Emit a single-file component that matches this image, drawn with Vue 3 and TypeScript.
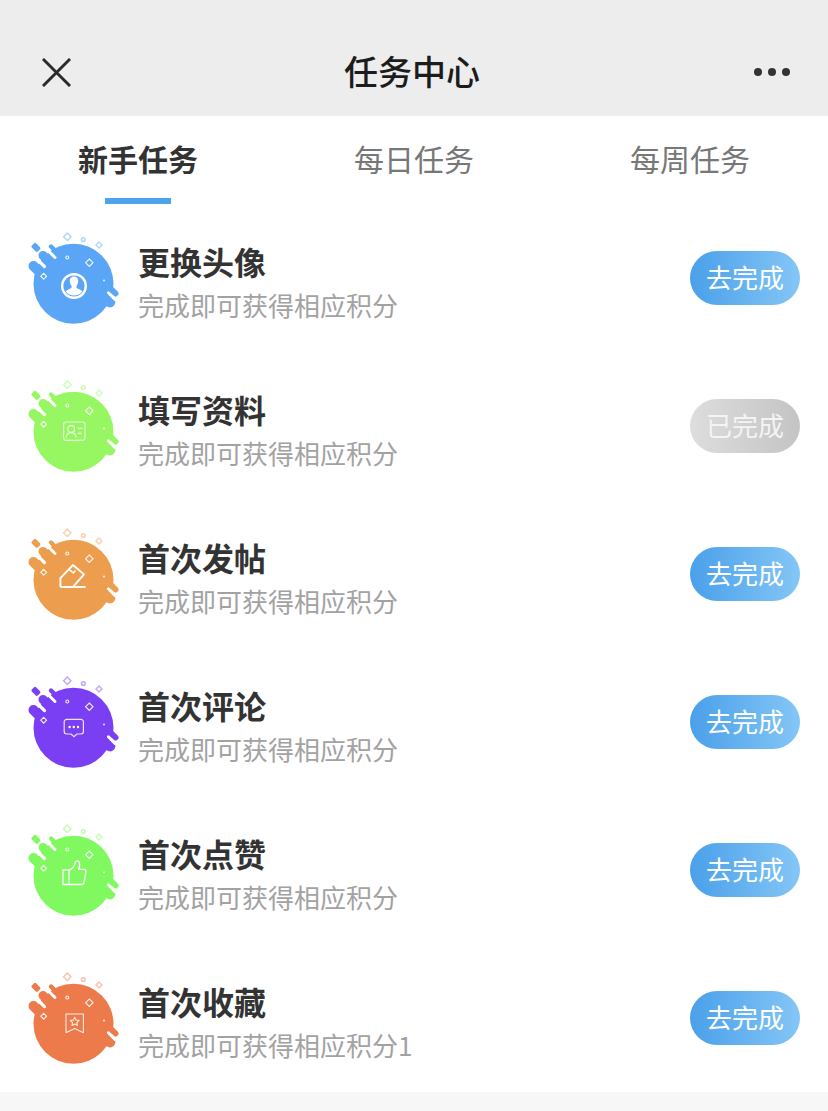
<template>
  <div class="page">
    <header class="nav">
      <svg class="nav-close" viewBox="0 0 30 30">
        <path d="M1 1 L29 29 M29 1 L1 29" />
      </svg>
      <span class="nav-title">任务中心</span>
      <span class="nav-more"><i /><i /><i /></span>
    </header>

    <nav class="tabs">
      <div v-for="(tab, i) in tabs" :key="tab" class="tab" :class="{ active: i === 0 }">
        {{ tab }}
      </div>
    </nav>

    <ul class="list">
      <li v-for="task in tasks" :key="task.title" class="row">
        <svg class="badge" viewBox="0 0 110 110" :style="{ color: task.color }">
          <!-- sparkles above the blob -->
          <g fill="none" stroke="currentColor" stroke-width="1.4" opacity="0.45">
            <path d="M47.3 7 L51 10.7 L47.3 14.4 L43.6 10.7 Z" />
            <circle cx="63.3" cy="13.6" r="1.8" stroke-width="1.6" />
            <path d="M79 16 L82 19 L79 22 L76 19 Z" />
          </g>
          <!-- blob -->
          <circle cx="53.5" cy="57.7" r="40" fill="currentColor" />
          <g stroke="currentColor" stroke-linecap="round" fill="none">
            <path d="M31 20.5 L40 29.5" stroke-width="4.4" />
            <path d="M23 29.5 L37 43.5" stroke-width="9" />
            <path d="M13.5 40 L28 54.5" stroke-width="10" />
            <path d="M86 58 L95.5 67.5" stroke-width="6" />
          </g>
          <rect x="11.6" y="18.4" width="8.4" height="6" rx="1.4" fill="currentColor" transform="rotate(45 16 21.5)" />
          <circle cx="90" cy="76" r="5.4" fill="currentColor" />
          <!-- white channels between the streaks -->
          <g stroke="#fff" stroke-linecap="round" fill="none">
            <path d="M17 33.1 L24.5 40.6" stroke-width="3.2" />
            <path d="M26 22.5 L35 31.5" stroke-width="3" />
            <path d="M88.4 66.8 L95 73.4" stroke-width="3" />
          </g>
          <!-- sparkles on the blob -->
          <g fill="none" stroke="#fff" stroke-width="1.1" opacity="0.9">
            <circle cx="47.3" cy="31.5" r="1.5" />
            <path d="M69.3 33 L73 36.7 L69.3 40.4 L65.6 36.7 Z" />
            <path d="M23.7 47.3 L26.6 50.2 L23.7 53.1 L20.8 50.2 Z" />
          </g>
          <circle cx="84" cy="54.5" r="1.1" fill="#fff" opacity="0.75" />

          <g v-if="task.icon === 'avatar'">
            <circle cx="54" cy="60" r="11.8" fill="none" stroke="#fff" stroke-width="2.4" />
            <path
              d="M54 50.6 C51 50.6 49.6 53 49.8 55.6 C50 57.6 50.8 59.2 51.6 60.2 L51.4 62 C49.6 63.2 46.8 63.6 45.8 65.6 C47.6 68.2 50.6 69.6 54 69.6 C57.4 69.6 60.4 68.2 62.2 65.6 C61.2 63.6 58.4 63.2 56.6 62 L56.4 60.2 C57.2 59.2 58 57.6 58.2 55.6 C58.4 53 57 50.6 54 50.6 Z"
              fill="#fff"
            />
          </g>
          <g v-else-if="task.icon === 'card'" fill="none" stroke="#fff" stroke-width="1.1" opacity="0.8">
            <rect x="43.6" y="48" width="21.4" height="18.4" rx="2.6" />
            <circle cx="51.2" cy="55" r="3.4" />
            <path d="M46.2 63.6 C46.6 60.4 48.6 58.6 51.2 58.6 C53.8 58.6 55.8 60.4 56.2 63.6" />
            <path d="M57.8 54.4 H62.4 M57.8 59.4 H61.4" />
          </g>
          <g v-else-if="task.icon === 'eraser'" fill="none" stroke="#fff" stroke-width="1.9" stroke-linejoin="round">
            <path d="M40.4 64.8 V56.2 L53 43 L64 52.4 L53 64.8" />
            <path d="M49 47.4 L53.4 51 L55.4 48.4" stroke-width="1.5" />
            <path d="M40.4 65 H65.6" />
          </g>
          <g v-else-if="task.icon === 'chat'">
            <path
              d="M46.6 49.4 H61 A2.4 2.4 0 0 1 63.4 51.8 V61.6 A2.4 2.4 0 0 1 61 64 H57 L54 66.8 L51 64 H46.6 A2.4 2.4 0 0 1 44.2 61.6 V51.8 A2.4 2.4 0 0 1 46.6 49.4 Z"
              fill="none"
              stroke="#fff"
              stroke-width="1.2"
              opacity="0.85"
            />
            <circle cx="49.6" cy="57" r="1.2" fill="#fff" />
            <circle cx="53.8" cy="57" r="1.2" fill="#fff" />
            <circle cx="58" cy="57" r="1.2" fill="#fff" />
          </g>
          <g v-else-if="task.icon === 'thumb'" fill="none" stroke="#fff" stroke-width="1.3" stroke-linejoin="round">
            <path d="M43 52 H49 V66.5 H43 Z" />
            <path d="M49 52.4 C52.6 50.8 54.6 48 55.4 44.4 C55.8 42.6 58.6 42.4 59.4 44.4 C60 46.4 59.4 49.4 58.6 51.4 H63.8 C65.4 51.4 66 52.6 65.8 54 L64 64.4 C63.8 65.8 62.8 66.5 61.6 66.5 H49" />
          </g>
          <g v-else fill="none" stroke="#fff" stroke-width="1.1" stroke-linejoin="round" opacity="0.85">
            <path d="M46 48 H63.4 V66.8 L54.7 62.6 L46 66.8 Z" />
            <path d="M54.7 51.2 L56 54 L59.1 54.4 L56.9 56.5 L57.4 59.6 L54.7 58.1 L52 59.6 L52.5 56.5 L50.3 54.4 L53.4 54 Z" />
          </g>
        </svg>

        <div class="info">
          <span class="info-title">{{ task.title }}</span>
          <span class="info-sub">{{ task.sub }}</span>
        </div>

        <button class="action" :class="{ done: task.done }">
          {{ task.done ? '已完成' : '去完成' }}
        </button>
      </li>
    </ul>
  </div>
</template>

<script setup lang="ts">
interface Task {
  title: string
  sub: string
  color: string
  icon: string
  done?: boolean
}

const tabs = ['新手任务', '每日任务', '每周任务']

const sub = '完成即可获得相应积分'

const tasks: Task[] = [
  { title: '更换头像', sub, color: '#5aa5f6', icon: 'avatar' },
  { title: '填写资料', sub, color: '#97f762', icon: 'card', done: true },
  { title: '首次发帖', sub, color: '#ec9d4e', icon: 'eraser' },
  { title: '首次评论', sub, color: '#7a3ff3', icon: 'chat' },
  { title: '首次点赞', sub, color: '#80f960', icon: 'thumb' },
  { title: '首次收藏', sub: sub + '1', color: '#ec7a4a', icon: 'bookmark' },
]
</script>

<style>
body {
  background: #f7f7f7;
}
</style>

<style scoped>
.page {
  min-height: 1111px;
  font-family: "Noto Sans CJK SC", "Noto Sans", sans-serif;
}

.nav {
  display: grid;
  grid-template-columns: 1fr auto 1fr;
  align-items: center;
  height: 116px;
  padding: 28px 38px 0 42px;
  box-sizing: border-box;
  background: #ededed;
}

.nav-close {
  width: 29px;
  height: 29px;
  fill: none;
  stroke: #2a2a2a;
  stroke-width: 3;
}

.nav-title {
  font-size: 34px;
  line-height: 40px;
  margin: 0 8px 2px 0;
  font-weight: 500;
  color: #1c1c1c;
}

.nav-more {
  display: flex;
  justify-content: flex-end;
  gap: 6px;
}

.nav-more i {
  width: 8px;
  height: 8px;
  border-radius: 50%;
  background: #333;
}

.tabs {
  display: flex;
  height: 88px;
  background: #fff;
}

.tab {
  position: relative;
  flex: 1;
  padding-top: 20px;
  text-align: center;
  font-size: 30px;
  line-height: 44px;
  color: #777;
}

.tab.active {
  font-weight: 700;
  color: #333;
}

.tab.active::after {
  content: "";
  position: absolute;
  left: 105px;
  bottom: 0;
  width: 66px;
  height: 6px;
  background: #4ea4ec;
}

.list {
  margin: 0;
  padding: 0;
  list-style: none;
  background: #fff;
}

.row {
  display: flex;
  align-items: center;
  height: 148px;
  padding: 0 28px 0 20px;
  box-sizing: border-box;
}

.badge {
  flex: none;
  width: 110px;
  height: 110px;
  margin: 6px 8px 0 0;
}

.info {
  flex: 1;
  display: flex;
  flex-direction: column;
  gap: 4px;
  padding-top: 6px;
}

.info-title {
  font-size: 32px;
  line-height: 44px;
  font-weight: 700;
  color: #333;
}

.info-sub {
  font-size: 26px;
  line-height: 36px;
  color: #a2a2a2;
}

.action {
  flex: none;
  width: 110px;
  height: 54px;
  padding: 0 0 4px;
  border: 0;
  border-radius: 27px;
  font-family: inherit;
  font-size: 26px;
  font-weight: 400;
  color: #fff;
  background: linear-gradient(90deg, #4aa0ea, #84c6f6);
}

.action.done {
  color: #f4f4f4;
  background: linear-gradient(90deg, #dddddd, #c4c4c4);
}
</style>
